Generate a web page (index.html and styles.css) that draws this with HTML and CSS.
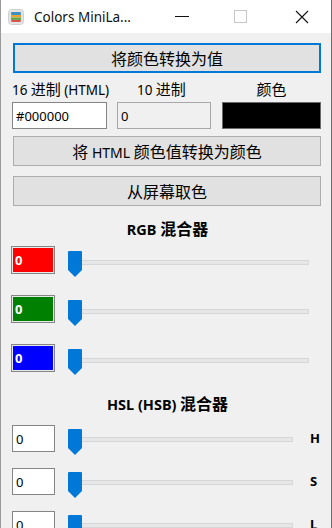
FILE: index.html
```html
<!DOCTYPE html>
<html lang="zh-CN">
<head>
    <meta charset="UTF-8">
    <meta name="viewport" content="width=device-width, initial-scale=1.0">
    <title>Colors MiniLab</title>
    <link rel="stylesheet" href="styles.css">
</head>
<body>
    <div class="window">
        <!-- 標題列 -->
        <div class="titlebar">
            <svg class="app-icon" width="16" height="16" viewBox="0 0 16 16">
                <rect x="0.5" y="0.5" width="15" height="15" rx="3" fill="#e4e4e4" stroke="#d0d0d0"/>
                <rect x="3" y="3" width="10" height="3" rx="1" fill="#3f8fc0"/>
                <rect x="3" y="6" width="10" height="2.5" fill="#e8a437"/>
                <rect x="3" y="8.5" width="10" height="2.5" fill="#6aa84f"/>
                <rect x="3" y="11" width="10" height="2" rx="1" fill="#d9534f"/>
            </svg>
            <span class="title">Colors MiniLa...</span>
            <div class="controls">
                <span class="ctl-min"></span>
                <span class="ctl-max"></span>
                <svg class="ctl-close" width="14" height="14" viewBox="0 0 14 14">
                    <path d="M1 1 L13 13 M13 1 L1 13" stroke="#111" stroke-width="1.1"/>
                </svg>
            </div>
        </div>

        <div class="content">
            <button class="btn btn-focus">将颜色转换为值</button>

            <div class="value-grid">
                <div class="lbl"><span class="lt">16</span> 进制 <span class="lt">(HTML)</span></div>
                <div class="lbl lbl-dec"><span class="lt">10</span> 进制</div>
                <div class="lbl lbl-color">颜色</div>
                <input class="field" type="text" value="#000000">
                <input class="field field-ro" type="text" value="0" readonly>
                <div class="swatch"></div>
            </div>

            <button class="btn btn-html">将 <span class="lt">HTML</span> 颜色值转换为颜色</button>
            <button class="btn btn-pick">从屏幕取色</button>

            <!-- RGB 混合器 -->
            <div class="section-title"><span class="lt">RGB</span> 混合器</div>
            <div class="mix-row rgb">
                <div class="cbox red">0</div>
                <div class="slider rgb-slider"><div class="track"></div><div class="thumb"></div></div>
            </div>
            <div class="mix-row rgb">
                <div class="cbox green">0</div>
                <div class="slider rgb-slider"><div class="track"></div><div class="thumb"></div></div>
            </div>
            <div class="mix-row rgb">
                <div class="cbox blue">0</div>
                <div class="slider rgb-slider"><div class="track"></div><div class="thumb"></div></div>
            </div>

            <!-- HSL 混合器 -->
            <div class="section-title hsl-title"><span class="lt">HSL (HSB)</span> 混合器</div>
            <div class="mix-row hsl">
                <input class="field hbox" type="text" value="0">
                <div class="slider hsl-slider"><div class="track"></div><div class="thumb"></div></div>
                <span class="axis">H</span>
            </div>
            <div class="mix-row hsl">
                <input class="field hbox" type="text" value="0">
                <div class="slider hsl-slider"><div class="track"></div><div class="thumb"></div></div>
                <span class="axis">S</span>
            </div>
            <div class="mix-row hsl">
                <input class="field hbox" type="text" value="0">
                <div class="slider hsl-slider"><div class="track"></div><div class="thumb"></div></div>
                <span class="axis">L</span>
            </div>
        </div>
    </div>
</body>
</html>
```
FILE: styles.css
```css
/* 基本樣式 */
body {
    margin: 0;
    font-family: "Noto Sans CJK SC", "Noto Sans", sans-serif;
    font-size: 15px;
    color: #000;
    background-color: #f0f0f0;
    overflow: hidden;
}

.window {
    width: 330px;
    height: 528px;
    border-left: 1px solid #9a9a9a;
    border-right: 1px solid #6e6e6e;
    background-color: #f0f0f0;
    overflow: hidden;
}

.lt {
    font-family: "Noto Sans", sans-serif;
    font-size: 13px;
}

/* 標題列 */
.titlebar {
    height: 33px;
    background-color: #fff;
    display: flex;
    align-items: center;
}

.app-icon {
    margin-left: 7px;
    margin-top: 1px;
}

.title {
    margin-left: 10px;
    font-family: "Noto Sans", sans-serif;
    font-size: 13.5px;
    color: #111;
}

.controls {
    margin-left: auto;
    display: flex;
    align-items: center;
}

.ctl-min {
    width: 14px;
    height: 1px;
    background-color: #111;
    margin-right: 45px;
}

.ctl-max {
    width: 11px;
    height: 11px;
    border: 1px solid #c8c8c8;
    margin-right: 48px;
}

.ctl-close {
    margin-right: 22px;
}

/* 內容 */
.content {
    padding: 10px 8px 0 11px;
    display: flex;
    flex-direction: column;
}

.btn {
    margin: 0 2px 0 1px;
    height: 30px;
    background-color: #e1e1e1;
    border: 1px solid #adadad;
    font-family: inherit;
    font-size: 16px;
    color: #000;
    padding: 0;
}

.btn .lt {
    font-size: 14px;
}

.btn-focus {
    border: 2px solid #0078d7;
}

.btn-html {
    margin-top: 7px;
}

.btn-pick {
    margin-top: 10px;
}

.value-grid {
    margin-top: 4px;
    display: grid;
    grid-template-columns: 95px 94px 100px;
    grid-template-rows: 25px 27px;
    column-gap: 10px;
}

.value-grid .swatch {
    margin-left: 1px;
}

.lbl {
    font-size: 15px;
    line-height: 24px;
    white-space: nowrap;
}

.lbl .lt {
    font-size: 13.5px;
}

.lbl-dec {
    padding-left: 20px;
}

.lbl-color {
    text-align: center;
    margin-left: 1px;
}

.field {
    box-sizing: border-box;
    height: 27px;
    border: 1px solid #858585;
    background-color: #fff;
    font-family: "Noto Sans", sans-serif;
    font-size: 13px;
    padding: 0 0 0 3px;
    margin: 0;
    outline: none;
    color: #000;
}

.field-ro {
    background-color: #f0f0f0;
    border-color: #a8a8a8;
}

.swatch {
    background-color: #000;
    border: 1px solid #6a6a6a;
}

/* 混合器 */
.section-title {
    margin-top: 12px;
    height: 20px;
    line-height: 20px;
    text-align: center;
    font-weight: bold;
    font-size: 16px;
}

.section-title .lt {
    font-size: 14.5px;
}

.hsl-title {
    margin-top: 21px;
}

.mix-row {
    display: flex;
    align-items: flex-start;
    height: 28px;
    flex: none;
}

.mix-row.rgb {
    margin-top: 21px;
}

.mix-row.hsl {
    margin-top: 16px;
    height: 27px;
}

.section-title + .mix-row.rgb {
    margin-top: 8px;
}

.section-title + .mix-row.hsl {
    margin-top: 12px;
}

.cbox {
    box-sizing: border-box;
    width: 44px;
    height: 28px;
    margin-left: -1px;
    border: 1px solid #858585;
    box-shadow: inset 0 0 0 1px #e8e8e8;
    color: #fff;
    font-family: "Noto Sans", sans-serif;
    font-weight: bold;
    font-size: 13px;
    line-height: 26px;
    padding-left: 3px;
}

.red { background-color: #ff0000; }
.green { background-color: #008000; }
.blue { background-color: #0000ff; }

.hbox {
    width: 43px;
}

.slider {
    position: relative;
    height: 31px;
    margin-left: 13px;
}

.rgb-slider {
    width: 241px;
}

.hsl-slider {
    width: 225px;
}

.track {
    position: absolute;
    left: 0;
    right: 0;
    top: 14px;
    height: 3px;
    background-color: #e7e7e7;
    border: 1px solid #d6d6d6;
}

/* 滑桿按鈕 */
.thumb {
    position: absolute;
    left: 0;
    top: 5px;
    width: 14px;
    height: 26px;
    background-color: #0078d7;
    clip-path: polygon(0 0, 100% 0, 100% 73%, 50% 100%, 0 73%);
    border-radius: 1px;
}

.hsl .thumb {
    top: 4px;
}

.hsl .track {
    top: 12px;
}

.axis {
    margin-left: 17px;
    font-family: "Noto Sans", sans-serif;
    font-weight: bold;
    font-size: 13px;
    line-height: 27px;
}
```
